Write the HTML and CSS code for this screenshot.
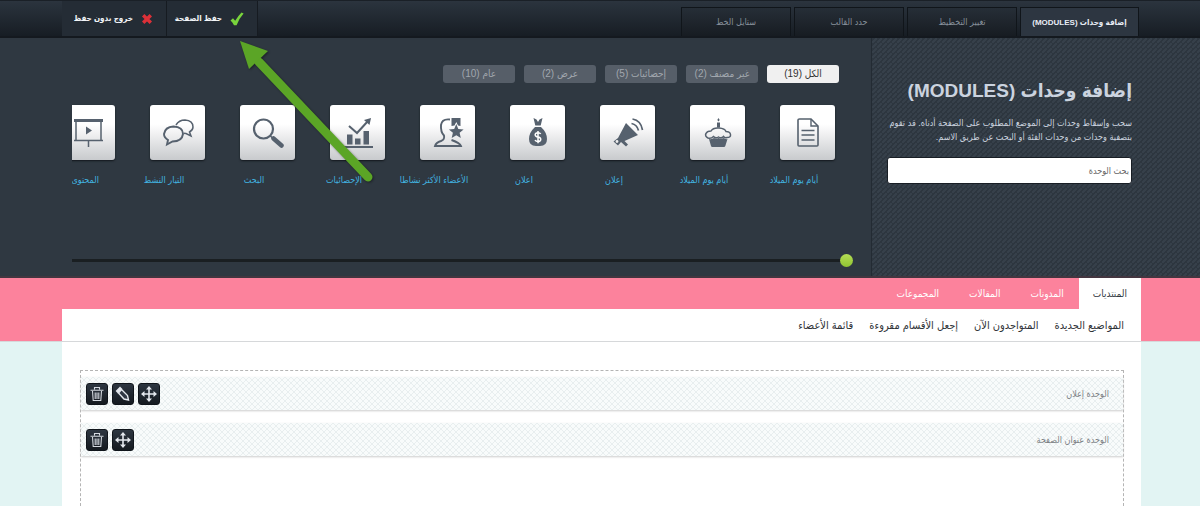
FILE: index.html
```
<!DOCTYPE html>
<html lang="ar" dir="rtl">
<head>
<meta charset="utf-8">
<title>إضافة وحدات</title>
<link rel="stylesheet" href="styles.css">
</head>
<body>
<header class="topbar">
  <nav class="tabs">
    <a class="tab tab-active" href="#modules">إضافة وحدات (MODULES)</a>
    <a class="tab" href="#layout">تغيير التخطيط</a>
    <a class="tab" href="#template">حدد القالب</a>
    <a class="tab" href="#style">ستايل الخط</a>
  </nav>
  <div class="actions">
    <button class="action" type="button">
      <svg class="action-icon" width="14" height="14" viewBox="0 0 14 14"><path d="M.5 8.500L3 6.300 5.200 8.800Q8 4 11.500 .5L13.600 1.500Q9 6.500 6.600 13.300L4 13.300Q2.500 10 .5 8.500Z" fill="#79d43c"/></svg>
      حفظ الصفحة
    </button>
    <button class="action action-exit" type="button">
      <svg class="action-icon" width="12" height="12" viewBox="0 0 12 12"><path d="M2.200 2.200L9.800 9.800M9.800 2.200L2.200 9.800" stroke="#dc3038" stroke-width="3.400"/></svg>
      خروج بدون حفظ
    </button>
  </div>
</header>

<section class="panel">
  <div class="panel-info">
    <h1 class="panel-title">إضافة وحدات (MODULES)</h1>
    <p class="panel-text">سحب وإسقاط وحدات إلى الموضع المطلوب على الصفحة أدناه. قد تقوم بتصفية وحدات من وحدات الفئة أو البحث عن طريق الاسم.</p>
    <input class="search" type="text" placeholder="بحث الوحدة" aria-label="بحث الوحدة">
  </div>
  <div class="panel-main">
    <div class="filters">
      <button class="filter filter-active" type="button">الكل (19)</button>
      <button class="filter" type="button">غير مصنف (2)</button>
      <button class="filter" type="button">إحصائيات (5)</button>
      <button class="filter" type="button">عرض (2)</button>
      <button class="filter" type="button">عام (10)</button>
    </div>
    <div class="modules">
      <a class="module" href="#m1"><span class="tile"><svg class="icon" viewBox="0 0 32 32"><path d="M7.500 2H19l7 7v19q0 1-1 1H7q-1 0-1-1V3q0-1 1.500-1Z" fill="none" stroke="#56616e" stroke-width="1.600"/><path d="M19 2v7h7" fill="none" stroke="#56616e" stroke-width="1.400"/><path d="M9.500 13.500h13M9.500 18h13M9.500 23h13" stroke="#56616e" stroke-width="1.300"/></svg></span><span class="label">أيام يوم الميلاد</span></a>
      <a class="module" href="#m2"><span class="tile"><svg class="icon" viewBox="0 0 32 32"><path d="M16.500 1l1.200 2-1.200 1.500L15.300 3ZM15 5.500h3v5h-3Z" fill="#56616e"/><path d="M6 21Q2.500 19 4 16.500 5 14 9 14q2-3.500 8-3t7 3.500q4 0 4.500 3T25 20.500q-2 1-3.500-1-2 2.500-5 .5-3 2-5-.5Q9 22 6 21Z" fill="none" stroke="#56616e" stroke-width="1.500"/><path d="M7 22q3 .5 5-1 2 1.500 4.500 0 3 1.500 5 0 2 1.500 4 1l-2.200 7q-.3 1-1.300 1H10.300q-1 0-1.300-1Z" fill="#56616e"/></svg></span><span class="label">أيام يوم الميلاد</span></a>
      <a class="module" href="#m3"><span class="tile"><svg class="icon" viewBox="0 0 32 32"><path d="M14 6L26 18 12.500 24l3.500 3.500-2 2-5-4.500-3 3.500L1.500 24.500 6 21Z" fill="#56616e"/><circle cx="5" cy="24.500" r="1.400" fill="#eee"/><path d="M19.500 6.500q5.500 1 7 7M20.500 2q8.500 1.500 10 11" fill="none" stroke="#56616e" stroke-width="1.700"/></svg></span><span class="label">إعلان</span></a>
      <a class="module" href="#m4"><span class="tile"><svg class="icon" viewBox="0 0 32 32"><path d="M11.500 1l3 1.500L16 5l1.500-2.500 3-1.500-1.800 7.500h-5.400ZM13 10h6q6 5.500 6 12 0 7-7 7h-4q-7 0-7-7 0-6.500 6-12Z" fill="#56616e"/><path d="M18.700 17Q18 15.700 16 15.700c-4 0-3.500 4 0 4.300s3.800 4.500 0 4.500q-2.200 0-3-1.500M16 14v12.300" fill="none" stroke="#fff" stroke-width="1.500"/></svg></span><span class="label">اعلان</span></a>
      <a class="module" href="#m5"><span class="tile"><svg class="icon" viewBox="0 0 32 32"><path d="M18 2.500q-8-1-9 5.500-.5 7 3 10.500 1 4-3 5.500-5 1.500-6 5h26q-1-3-9.500-6" fill="none" stroke="#56616e" stroke-width="1.900"/><path d="M19.500 1h9v8l-2.500-.5-1.700-3.500-1.800 3.500-3 .5ZM24.300 7l2 5 5.300.4-4 3.400 1.200 5.200-4.500-2.700-4.600 2.700 1.200-5.200-4-3.400 5.300-.4Z" fill="#56616e"/></svg></span><span class="label">الأعضاء الأكثر نشاطا</span></a>
      <a class="module" href="#m6"><span class="tile"><svg class="icon" viewBox="0 0 32 32"><path d="M5 17.500h5.500v10H5ZM13 21.500h5.500v6H13ZM21.500 14H27v13.500h-5.500ZM1 29h30v2H1Z" fill="#56616e"/><path d="M7 9l8 7L26 4" fill="none" stroke="#56616e" stroke-width="2"/><path d="M22 3l7-2-1.500 7Z" fill="#56616e"/></svg></span><span class="label">الإحصائيات</span></a>
      <a class="module" href="#m7"><span class="tile"><svg class="icon" viewBox="0 0 32 32"><circle cx="11.500" cy="12" r="9.500" fill="none" stroke="#56616e" stroke-width="2.200"/><path d="M18 18.500l3 3" stroke="#56616e" stroke-width="1.500"/><path d="M21.500 21.500l8 7" stroke="#56616e" stroke-width="4.500" stroke-linecap="round"/></svg></span><span class="label">البحث</span></a>
      <a class="module" href="#m8"><span class="tile"><svg class="icon" viewBox="0 0 32 32"><path d="M14 8q3-5 9-5 8 .5 8 7 0 3-3.500 5l1.500 4-5-2.500-2.500-.2" fill="none" stroke="#56616e" stroke-width="1.500"/><path d="M6 23q-4-2.500-4-6 1-7 9.500-7.500Q21 10 21 17q-1 7.500-10.500 7.500L5 27.500Z" fill="none" stroke="#56616e" stroke-width="1.900"/></svg></span><span class="label">التيار النشط</span></a>
      <a class="module" href="#m9"><span class="tile"><svg class="icon" viewBox="0 0 32 32"><path d="M2 2h29v3H2Z" fill="#56616e"/><path d="M4 4v19.500M29 4v19.500M2 23.500h29M16.500 24v6" stroke="#56616e" stroke-width="1.500"/><path d="M14 9.500l6 4-6 4Z" fill="#56616e"/></svg></span><span class="label label-start">المحتوى</span></a>
    </div>
    <input class="slider" type="range" min="0" max="100" value="0" aria-label="تمرير الوحدات">
  </div>
</section>

<div class="site">
  <nav class="sitenav">
    <a class="sitetab sitetab-active" href="#forums">المنتديات</a>
    <a class="sitetab" href="#blogs">المدونات</a>
    <a class="sitetab" href="#articles">المقالات</a>
    <a class="sitetab" href="#groups">المجموعات</a>
  </nav>
  <nav class="subnav">
    <a class="sublink" href="#new">المواضيع الجديدة</a>
    <a class="sublink" href="#online">المتواجدون الآن</a>
    <a class="sublink" href="#read">إجعل الأقسام مقروءة</a>
    <a class="sublink" href="#members">قائمة الأعضاء</a>
  </nav>
</div>

<main class="page">
  <div class="dropzone">
    <div class="bar">
      <span class="bar-name">الوحدة إعلان</span>
      <button class="tool" type="button" aria-label="نقل"><svg width="18" height="18" viewBox="0 0 18 18"><path d="M9 3v12M3 9h12" stroke="#e4e8ee" stroke-width="1.600"/><path d="M9 1l3 3.500H6ZM9 17l3-3.500H6ZM1 9l3.500-3v6ZM17 9l-3.500-3v6Z" fill="#e4e8ee"/></svg></button>
      <button class="tool" type="button" aria-label="تحرير"><svg width="18" height="18" viewBox="0 0 18 18"><path d="M6 3L3 6l1 1 3-3Z" fill="#e4e8ee" stroke="#e4e8ee" stroke-width="2"/><path d="M7.500 4.500l6 6 1 4.500-4.500-1-5.500-6Z" fill="#303844" stroke="#e4e8ee" stroke-width="1.400"/></svg></button>
      <button class="tool" type="button" aria-label="حذف"><svg width="18" height="18" viewBox="0 0 18 18"><path d="M6.500 4.500V2.500h5v2M2.500 5.200h13M4.500 6l.7 9.500h7.600L13.500 6M7.200 7.500v6.500M9 7.500v6.500M10.800 7.500v6.500" fill="none" stroke="#d4d9e0" stroke-width="1.100"/></svg></button>
    </div>
    <div class="bar">
      <span class="bar-name">الوحدة عنوان الصفحة</span>
      <button class="tool" type="button" aria-label="نقل"><svg width="18" height="18" viewBox="0 0 18 18"><path d="M9 3v12M3 9h12" stroke="#e4e8ee" stroke-width="1.600"/><path d="M9 1l3 3.500H6ZM9 17l3-3.500H6ZM1 9l3.500-3v6ZM17 9l-3.500-3v6Z" fill="#e4e8ee"/></svg></button>
      <button class="tool" type="button" aria-label="حذف"><svg width="18" height="18" viewBox="0 0 18 18"><path d="M6.500 4.500V2.500h5v2M2.500 5.200h13M4.500 6l.7 9.500h7.600L13.500 6M7.200 7.500v6.500M9 7.500v6.500M10.800 7.500v6.500" fill="none" stroke="#d4d9e0" stroke-width="1.100"/></svg></button>
    </div>
  </div>
</main>

<svg class="pointer" width="140" height="150" viewBox="0 0 140 150" aria-hidden="true"><path d="M23 25L132 140" stroke="#5ba526" stroke-width="9" stroke-linecap="round"/><path d="M4 4L32 14 13 32Z" fill="#5ba526"/></svg>
</body>
</html>
```
FILE: styles.css
```
* { box-sizing: border-box; }
body {
  margin: 0;
  min-height: 100vh;
  display: flex;
  flex-direction: column;
  background: #e2f4f3;
  font-family: "Liberation Sans", "DejaVu Sans Condensed", "DejaVu Sans", sans-serif;
  font-size: 9px;
}
a { text-decoration: none; color: inherit; }
button { font: inherit; cursor: pointer; }

.topbar {
  display: flex;
  justify-content: space-between;
  height: 38px;
  padding: 0 61px 0 62px;
  background: linear-gradient(#2b343e, #171d24);
  border-top: 1px solid #1a2027;
  border-bottom: 2px solid #14191f;
}
.tabs { display: flex; gap: 3px; padding-top: 6px; }
.tab {
  width: 110px;
  display: flex;
  align-items: center;
  justify-content: center;
  border: 1px solid #10151a;
  border-bottom: 0;
  background: linear-gradient(#262e37, #171c22);
  color: #87909a;
  white-space: nowrap;
}
.tab-active { width: 119px; background: #2d3641; color: #e8edf5; font-size: 8px; font-weight: bold; }
.actions { display: flex; }
.action {
  display: flex;
  align-items: center;
  gap: 8px;
  width: 92px;
  padding: 0 13px;
  border: 0;
  border-inline: 1px solid #161b21;
  background: #242c35;
  color: #f2f5f8;
  font-size: 8px;
  font-weight: bold;
  white-space: nowrap;
}
.action-icon { flex: none; }
.action-exit { width: 104px; border-inline: 0; }

.panel {
  display: flex;
  height: 240px;
  background: #2f3841;
  border-bottom: 2px solid #433640;
}
.panel-info {
  width: 329px;
  flex: none;
  padding: 39px 68px 0 15px;
  border-left: 1px solid #232b33;
  background: linear-gradient(135deg, #2d363f 38%, #36404a 38% 62%, #2d363f 62%) 0 0 / 5px 5px;
  color: #cbd3df;
}
.panel-title { margin: 0; font-size: 19px; line-height: 28px; white-space: nowrap; }
.panel-text { margin: 11px 0 0; line-height: 14px; }
.search {
  display: block;
  width: 100%;
  height: 27px;
  margin-top: 13px;
  padding: 0 2px;
  border: 1px solid #181e25;
  border-radius: 3px;
  background: #fff;
  color: #555;
  font: inherit;
}
.search::placeholder { color: #666; opacity: 1; }
.panel-main { flex: 1; min-width: 0; padding: 27px 32px 0 72px; }
.filters { display: flex; gap: 9px; }
.filter {
  width: 72px;
  height: 18px;
  padding: 0;
  border: 0;
  border-radius: 3px;
  background: #565e68;
  color: #a1a7ae;
  font-size: 10px;
  line-height: 18px;
}
.filter-active { background: #f0f0f0; color: #333; }
.modules { display: flex; height: 150px; padding-top: 22px; overflow: hidden; }
.module { width: 90px; flex: none; color: #42b4e0; }
.tile {
  display: flex;
  align-items: center;
  justify-content: center;
  width: 55px;
  height: 55px;
  margin-right: 4px;
  border-radius: 3px;
  background: linear-gradient(#fff 35%, #c8cacd);
  box-shadow: 0 1px 2px #12171c;
}
.icon { width: 32px; height: 32px; }
.label { display: block; margin-top: 14px; line-height: 12px; text-align: center; white-space: nowrap; }
.label-start { text-align: start; padding-right: 20px; }
.slider {
  appearance: none;
  display: block;
  width: calc(100% + 14px);
  height: 14px;
  margin: 20px -14px 0 0;
  background: linear-gradient(#1a1f22, #1a1f22) center / 100% 3px no-repeat;
}
.slider::-webkit-slider-thumb {
  appearance: none;
  width: 13px;
  height: 13px;
  border-radius: 50%;
  background: linear-gradient(#b5de55, #8fc332);
}

.site { padding: 0 59px 0 62px; background: #fc829c; border-bottom: 1px solid #d6d8da; }
.sitenav { display: flex; height: 31px; font-size: 10px; }
.sitetab { display: flex; align-items: center; padding: 0 15px; color: #fff; }
.sitetab-active { padding: 0 14px; background: #fff; color: #333a44; }
.subnav { display: flex; gap: 16px; align-items: center; height: 32px; padding: 0 17px; background: #fff; color: #2f3338; font-size: 11px; }

.page { flex: 1; display: flex; margin: 0 59px 0 62px; padding: 28px 17px 0 18px; background: #fff; }
.dropzone { flex: 1; border: 1px dashed #b4b4b4; border-bottom: 0; padding-top: 6px; }
.bar {
  display: flex;
  align-items: center;
  gap: 4px;
  height: 33px;
  margin-bottom: 13px;
  padding: 0 14px 0 5px;
  background:
    linear-gradient(45deg, transparent 46%, #e8eeef 46% 54%, transparent 54%) 0 0 / 6px 6px,
    linear-gradient(135deg, transparent 46%, #e8eeef 46% 54%, transparent 54%) 0 0 / 6px 6px,
    #f8fbfb;
  box-shadow: 0 1px 2px #ccc;
  color: #7b7f83;
}
.bar-name { flex: 1; }
.tool {
  display: flex;
  align-items: center;
  justify-content: center;
  width: 22px;
  height: 22px;
  padding: 0;
  border: 1px solid #10151b;
  border-radius: 3px;
  background: linear-gradient(#2d3641, #151a20);
}
.pointer { position: absolute; left: 236px; top: 37px; pointer-events: none; filter: drop-shadow(1px 1px 1px #0006); }
```
